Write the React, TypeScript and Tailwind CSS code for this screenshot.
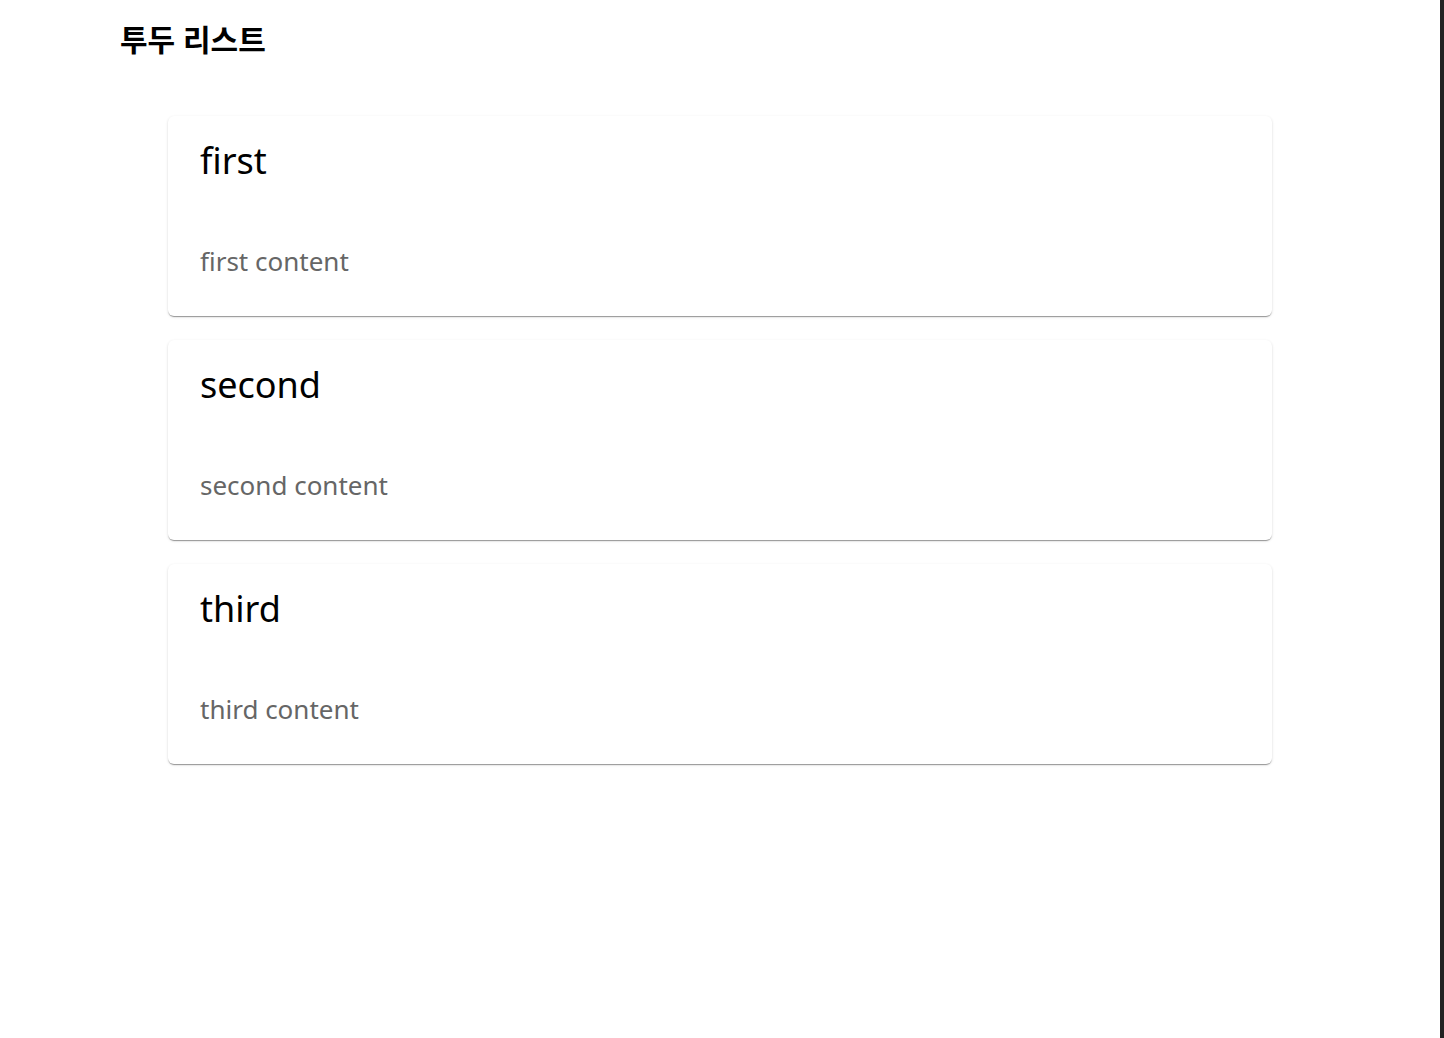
import React from 'react';

// ============================================
// DATA
// ============================================

type Todo = { id: number; title: string; content: string };

const todos: Todo[] = [
  { id: 1, title: 'first', content: 'first content' },
  { id: 2, title: 'second', content: 'second content' },
  { id: 3, title: 'third', content: 'third content' },
];

// ============================================
// TODO CARD
// ============================================

function TodoCard({ todo }: { todo: Todo }) {
  return (
    <div className="h-[200px] bg-white rounded-md px-8 pt-[20px] shadow-[0_2px_1px_-1px_rgba(0,0,0,0.25),0_1px_1px_0_rgba(0,0,0,0.14),0_1px_3px_0_rgba(0,0,0,0.12)]">
      <h2 className="text-[36px] leading-[50px] text-black font-normal">{todo.title}</h2>
      <p className="mt-[57px] text-[26px] leading-[36px] text-[#666666]">{todo.content}</p>
    </div>
  );
}

// ============================================
// PAGE
// ============================================

export default function App() {
  return (
    <div
      className="flex h-[1038px] w-full bg-white overflow-hidden"
      style={{ fontFamily: '"Noto Sans", "Noto Sans CJK KR", sans-serif' }}
    >
      <div className="flex-1">
        <h1 className="pl-[120px] pt-[18px] text-[30px] leading-[44px] font-bold text-black">
          투두 리스트
        </h1>
        <div className="mx-[168px] mt-[54px] flex flex-col gap-6">
          {todos.map((todo) => (
            <TodoCard key={todo.id} todo={todo} />
          ))}
        </div>
      </div>
      <div className="w-1 bg-[#222222]" />
    </div>
  );
}
